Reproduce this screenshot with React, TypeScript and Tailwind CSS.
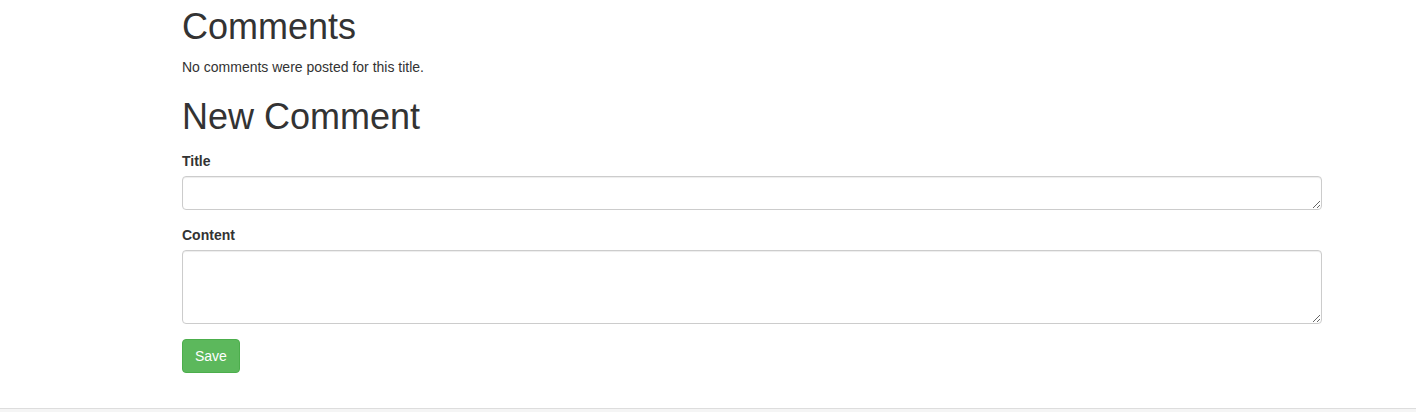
export default function App() {
  return (
    <div className="h-[412px] overflow-hidden bg-white font-['Liberation_Sans',Arial,sans-serif] text-[14px] leading-[20px] text-[#333]">
      <main className="h-[408px] pl-[182px] pt-[7px]">
        <div className="w-[1140px]">
          <h1 className="m-0 text-[36px] font-normal leading-[39.6px]">Comments</h1>
          <p className="mt-[10px] mb-[10px]">No comments were posted for this title.</p>
          <h1 className="mt-[20px] text-[36px] font-normal leading-[39.6px]">New Comment</h1>

          <form className="mt-[15px]" onSubmit={(e) => e.preventDefault()}>
            <div className="mb-[15px]">
              <label htmlFor="title" className="mb-[5px] inline-block font-bold">
                Title
              </label>
              <textarea
                id="title"
                className="block h-[34px] w-full rounded-[4px] border border-[#ccc] px-[12px] py-[6px] text-[14px] leading-[20px] shadow-[inset_0_1px_1px_rgba(0,0,0,0.075)] outline-none"
              />
            </div>
            <div className="mb-[15px]">
              <label htmlFor="content" className="mb-[5px] inline-block font-bold">
                Content
              </label>
              <textarea
                id="content"
                rows={3}
                className="block h-[74px] w-full rounded-[4px] border border-[#ccc] px-[12px] py-[6px] text-[14px] leading-[20px] shadow-[inset_0_1px_1px_rgba(0,0,0,0.075)] outline-none"
              />
            </div>
            <button
              type="submit"
              className="h-[34px] rounded-[4px] border border-[#4cae4c] bg-[#5cb85c] px-[12px] py-[6px] text-[14px] leading-[20px] text-white"
            >
              Save
            </button>
          </form>
        </div>
      </main>
      <footer className="h-[4px] border-t border-[#ddd] bg-[#f5f5f5]" />
    </div>
  );
}
